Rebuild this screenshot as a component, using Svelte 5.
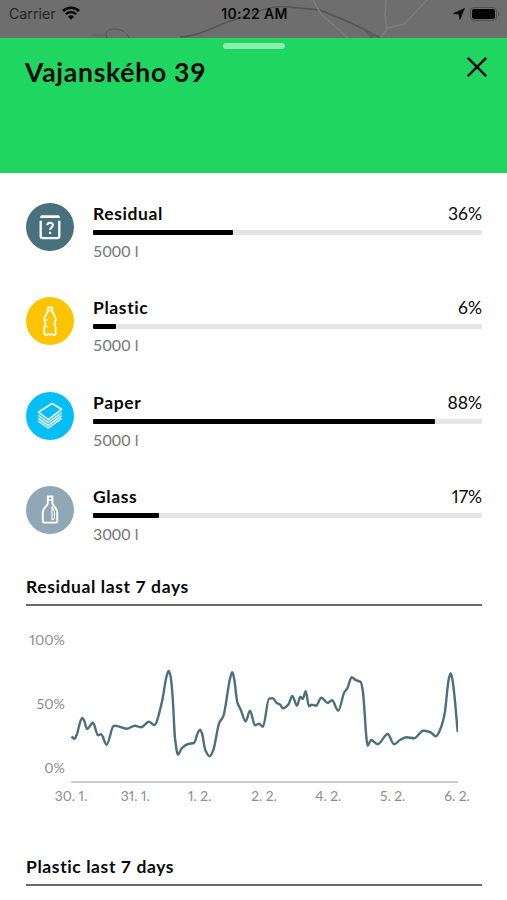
<script lang="ts">
  type Kind = "residual" | "plastic" | "paper" | "glass";

  const containers: { kind: Kind; label: string; fill: number; volume: string }[] = [
    { kind: "residual", label: "Residual", fill: 36, volume: "5000 l" },
    { kind: "plastic", label: "Plastic", fill: 6, volume: "5000 l" },
    { kind: "paper", label: "Paper", fill: 88, volume: "5000 l" },
    { kind: "glass", label: "Glass", fill: 17, volume: "3000 l" },
  ];

  const days = ["30. 1.", "31. 1.", "1. 2.", "2. 2.", "4. 2.", "5. 2.", "6. 2."];

  const points = [
    [71.5, 736.5], [74.3, 738.7], [77, 734], [80.5, 721], [82.3, 718], [84.3, 721], [87, 729],
    [93, 722.7], [98, 735.3], [101, 734.3], [106.7, 744.7], [113.3, 726.3], [115, 725.7],
    [126.7, 728.7], [135, 725.7], [141, 727.3], [149, 721.7], [154.3, 725], [162, 701.7],
    [166.5, 676.5], [168.7, 671], [170.8, 677.5], [172.7, 698], [175, 738], [178, 754.7],
    [181.7, 748.3], [188.3, 744], [194, 743], [198, 732.5], [200, 729.7], [202, 733.5],
    [205.3, 750], [209.7, 756.3], [213.3, 750], [219.3, 722.7], [223.3, 716.3],
    [230.3, 677.5], [232.3, 672.3], [234.2, 679], [237.3, 702.3], [240.7, 709.7],
    [245.7, 721.3], [250, 710.7], [255, 725.3], [259, 723.7], [263, 726.7], [269, 698.7],
    [272.7, 698.3], [276.7, 703], [279.7, 704.3], [283, 708.3], [288.3, 704.7],
    [292.3, 696], [297, 705.7], [300.3, 696.7], [302.7, 699], [305.7, 691.3],
    [309, 706.3], [311.7, 704.7], [316, 705.7], [321.3, 697.7], [327.7, 703],
    [332, 700.3], [338.3, 710.7], [344.3, 692.3], [347.3, 688.3], [351.7, 677.3],
    [355.7, 680], [360.7, 682], [362.7, 690], [367.7, 745.7], [371, 740],
    [377.7, 744.3], [387.7, 734], [394, 744.3], [400, 740], [406.7, 737.3],
    [414, 738.3], [423.3, 730.7], [430, 732], [436, 736.3], [440.7, 728.3],
    [444.7, 713.3], [448.7, 679.5], [450.7, 673.2], [452.5, 680], [454.7, 698.3],
    [457.7, 732],
  ];

  // monotone cubic, so the curve never overshoots a sample
  function smooth(pts: number[][]) {
    const slope = (i: number) => (pts[i + 1][1] - pts[i][1]) / (pts[i + 1][0] - pts[i][0]);
    const tangents = pts.map((_, i) => {
      if (i === 0) return slope(0);
      if (i === pts.length - 1) return slope(i - 1);
      const a = slope(i - 1);
      const b = slope(i);
      return a * b <= 0 ? 0 : (2 * a * b) / (a + b);
    });
    let d = `M${pts[0][0]} ${pts[0][1]}`;
    for (let i = 1; i < pts.length; i++) {
      const [x0, y0] = pts[i - 1];
      const [x1, y1] = pts[i];
      const h = (x1 - x0) / 3;
      d += `C${x0 + h} ${y0 + tangents[i - 1] * h} ${x1 - h} ${y1 - tangents[i] * h} ${x1} ${y1}`;
    }
    return d;
  }

  const line = smooth(points);
</script>

<div class="screen">
  <div class="status">
    <svg class="map" viewBox="0 0 507 38" fill="none">
      <path d="M92 35h14" stroke="#626262" />
      <path d="M107 38c-3-7 1-9 8-9 7 0 12 4 14 9" stroke="#555" />
      <path d="M180 37c22-1 32-11 57-18 18-7 34-14 52-12l31 3c20 8 42 17 60 28" stroke="#545454" stroke-width="1.4" />
      <path d="M360 26l11 12 6-2z" fill="#5d5d5d" />
      <path d="M313 0l8 14 27 24M386 0l-1 16 2 13-6 9M387 28l17-4 23-24" stroke="#7d7d7d" stroke-width="1.5" />
    </svg>
    <div class="carrier">
      <span>Carrier</span>
      <svg width="18" height="14" viewBox="0 0 18 14" fill="none" stroke="#080808">
        <path d="M1 5a11.5 11.5 0 0 1 16 0" stroke-width="2.6" />
        <path d="M3.8 8.2a7.5 7.5 0 0 1 10.4 0" stroke-width="2.3" />
        <path d="M6 10.8a4.3 4.3 0 0 1 6 0L9 13.8z" fill="#080808" stroke="none" />
      </svg>
    </div>
    <span class="time">10:22 AM</span>
    <div class="power">
      <svg width="12" height="12" viewBox="0 0 12 12"><path d="M11.5.5L6.8 11.5 6 6.2.3 5.5z" fill="#080808" stroke="#080808" stroke-width=".6" /></svg>
      <svg width="30" height="14" viewBox="0 0 30 14">
        <rect x=".5" y=".5" width="26" height="13" rx="3.5" fill="none" stroke="#525252" />
        <rect x="2" y="2" width="23" height="10" rx="2.2" fill="#050505" />
        <path d="M28 4.5c2 1 2 4 0 5z" fill="#525252" />
      </svg>
    </div>
  </div>

  <header>
    <span class="grip"></span>
    <h1>Vajanského 39</h1>
    <button type="button" aria-label="Close">
      <svg width="20" height="20" viewBox="0 0 20 20" fill="none" stroke="#050505" stroke-width="2.4">
        <path d="M.8.8l18.4 18.4M19.2.8L.8 19.2" />
      </svg>
    </button>
  </header>

  <main>
    <ul>
      {#each containers as item (item.kind)}
        <li>
          <span class="icon {item.kind}">
            <svg width="48" height="48" viewBox="0 0 48 48" fill="none" stroke="#fff" stroke-linejoin="round">
              {#if item.kind === "residual"}
                <path d="M14.2 15.1V14q0-1.8 1.8-1.8h16q1.8 0 1.8 1.8v1.1z" fill="#fff" stroke="none" />
                <path d="M14.7 17.8v15.4q0 1.9 1.9 1.9h14.8q1.9 0 1.9-1.9V17.8" stroke-width="2.3" />
                <path d="M21.3 22.3c.1-3.3 5.6-3.4 5.6-.2 0 2.3-2.8 2.1-2.8 5M24.1 28.8v2.1" stroke-width="2.1" />
              {:else if item.kind === "plastic"}
                <path
                  d="M21.8 10.5h4.4v3.7c.4 2.8 3.6 4.7 3.6 8 0 1.8-1.3 2.5-1.3 4 0 1.7 1.2 2.5 1.2 4.3v6.1c0 1.5-1.3 1.6-2.3 1.3-1.2-1.1-1.9-1.1-3.4-.1-1.5-1-2.2-1-3.4.1-1 .3-2.3.2-2.3-1.3v-6.1c0-1.8 1.2-2.6 1.2-4.3 0-1.5-1.3-2.2-1.3-4 0-3.3 3.2-5.2 3.6-8z"
                  stroke-width="1.8"
                />
                <path d="M21 13.6h6M19 23h3M19 29.7h3" stroke-width="1.2" />
              {:else if item.kind === "paper"}
                <path d="M12.5 20.2L26 11.5l9.7 5.8-13.4 10.4z" stroke-width="1.6" />
                <path d="M12 23.2l10.2 7.3 13.5-9.8M12 26.1l10.2 7.3 13.5-9.8M12 29l10.2 7 13.5-9.6" stroke-width="1.4" />
              {:else}
                <path
                  d="M21.8 10.5h4.6v7c.8 3 4.8 4.5 4.8 9v8.2q0 1.9-1.9 1.9H18.7q-1.9 0-1.9-1.9v-8.2c0-4.5 4.2-6 5-9z"
                  stroke-width="1.9"
                />
                <path d="M21.5 14h5" stroke-width="1.3" />
                <path d="M26 20.5c.7 2 2.3 3.6 2.3 6V32q0 1.7-2.3 1.7z" stroke-width="1.1" />
              {/if}
            </svg>
          </span>
          <div class="info">
            <div class="row">
              <strong>{item.label}</strong>
              <span>{item.fill}%</span>
            </div>
            <div class="track"><div class="bar" style:width="{item.fill}%"></div></div>
            <small>{item.volume}</small>
          </div>
        </li>
      {/each}
    </ul>

    <section>
      <h2>Residual last 7 days</h2>
      <div class="chart">
        <div class="levels">
          <span>100%</span>
          <span>50%</span>
          <span>0%</span>
        </div>
        <svg class="plot" width="387" height="151" viewBox="71 632 387 151" fill="none">
          <path d="M71 782h387" stroke="#bdbdbd" stroke-width="1.3" />
          <path d={line} stroke="#4b6f7b" stroke-width="2.4" stroke-linejoin="round" />
        </svg>
      </div>
      <div class="days">
        {#each days as day}
          <span>{day}</span>
        {/each}
      </div>
    </section>

    <section class="next">
      <h2>Plastic last 7 days</h2>
    </section>
  </main>
</div>

<style>
  :global(body) {
    margin: 0;
    background: #fff;
  }

  .screen {
    width: 507px;
    height: 900px;
    overflow: hidden;
    background: #fff;
    color: #080808;
    font-family: Lato, "Open Sans", sans-serif;
  }

  .status {
    position: relative;
    display: grid;
    grid-template-columns: 1fr auto 1fr;
    align-items: center;
    box-sizing: border-box;
    height: 38px;
    padding: 0 7px 11px 9px;
    background: #6e6e6e;
    font-family: Inter, sans-serif;
    font-size: 14.2px;
  }

  .map {
    position: absolute;
    inset: 0;
    width: 507px;
    height: 38px;
  }

  .carrier,
  .time,
  .power {
    position: relative;
    display: flex;
    align-items: center;
  }

  .carrier {
    gap: 6px;
    color: #242424;
  }

  .carrier svg {
    margin-top: -2px;
  }

  .time {
    font-weight: 600;
    font-size: 14px;
    letter-spacing: 0.35px;
  }

  .power {
    justify-content: flex-end;
    gap: 5px;
  }

  header {
    position: relative;
    display: flex;
    justify-content: space-between;
    align-items: flex-start;
    box-sizing: border-box;
    height: 135px;
    padding: 18px 20px 0 25px;
    background: #1fd661;
  }

  .grip {
    position: absolute;
    top: 5px;
    left: 223px;
    width: 62px;
    height: 6px;
    border-radius: 3px;
    background: #8bedaf;
  }

  h1 {
    margin: 0;
    font-size: 26.5px;
    line-height: 32px;
    font-weight: 700;
    letter-spacing: 0.75px;
  }

  button {
    display: flex;
    margin-top: 1px;
    padding: 0;
    border: 0;
    background: none;
  }

  main {
    padding: 30px 25px 0 26px;
  }

  ul {
    display: flex;
    flex-direction: column;
    gap: 30.4px;
    margin: 0;
    padding: 0;
    list-style: none;
  }

  li {
    display: flex;
    gap: 19px;
    height: 64px;
  }

  .icon {
    flex: none;
    width: 48px;
    height: 48px;
    border-radius: 50%;
  }

  .icon svg {
    display: block;
  }

  .residual {
    background: #49707d;
  }

  .plastic {
    background: #fec400;
  }

  .paper {
    background: #04bff7;
  }

  .glass {
    background: #90a8b5;
  }

  .info {
    flex: 1;
  }

  .row {
    display: flex;
    justify-content: space-between;
    height: 27px;
    font-size: 17.5px;
    line-height: 21px;
    font-variant-numeric: proportional-nums;
  }

  strong {
    font-size: 17.5px;
    letter-spacing: 0.6px;
  }

  .track {
    height: 5px;
    border-radius: 1px;
    background: #e5e5e5;
  }

  .bar {
    height: 100%;
    border-radius: 1px;
    background: #000;
  }

  small {
    display: block;
    margin-top: 5px;
    color: #777;
    font-size: 16px;
    line-height: 21px;
    letter-spacing: 0.1px;
  }

  section {
    margin-top: 26px;
  }

  h2 {
    height: 28px;
    margin: 0;
    border-bottom: 2px solid #6b6b6b;
    font-size: 17.5px;
    line-height: 21px;
    font-weight: 700;
    letter-spacing: 0.6px;
  }

  .chart {
    display: flex;
    gap: 6px;
    margin-top: 26px;
  }

  .levels {
    display: flex;
    flex-direction: column;
    justify-content: space-between;
    align-items: flex-end;
    width: 39px;
    height: 144px;
    color: #8d8d8d;
    font-size: 14.2px;
    line-height: 16px;
    font-variant-numeric: proportional-nums;
  }

  .days {
    display: flex;
    justify-content: space-between;
    margin: 4px 4px 0 24px;
    color: #8d8d8d;
    font-size: 13.8px;
    line-height: 18px;
    font-variant-numeric: proportional-nums;
  }

  .days span {
    width: 42px;
    text-align: center;
    white-space: nowrap;
  }

  .next {
    margin-top: 51px;
  }
</style>
